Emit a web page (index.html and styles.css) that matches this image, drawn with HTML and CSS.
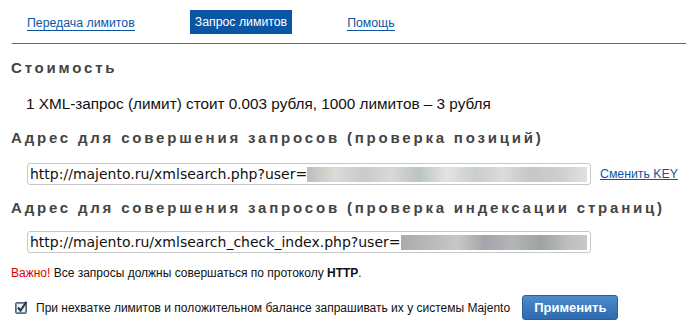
FILE: index.html
```html
<!DOCTYPE html>
<html lang="ru">
<head>
    <meta charset="UTF-8">
    <title>XML лимиты</title>
    <link rel="stylesheet" href="styles.css">
</head>
<body>

    <div class="tabs">
        <a class="tab" href="#">Передача лимитов</a>
        <a class="tab active" href="#">Запрос лимитов</a>
        <a class="tab" href="#">Помощь</a>
    </div>

    <div class="content">
        <h2>Стоимость</h2>
        <p class="price">1 XML-запрос (лимит) стоит 0.003 рубля, 1000 лимитов – 3 рубля</p>

        <h2>Адрес для совершения запросов (проверка позиций)</h2>
        <div class="url-row url-row-first">
            <div class="url-box">
                <span>http://majento.ru/xmlsearch.php?user=</span>
                <span class="blur blur-long"></span>
            </div>
            <a class="change-key" href="#">Сменить KEY</a>
        </div>

        <h2>Адрес для совершения запросов (проверка индексации страниц)</h2>
        <div class="url-row">
            <div class="url-box">
                <span>http://majento.ru/xmlsearch_check_index.php?user=</span>
                <span class="blur blur-short"></span>
            </div>
        </div>

        <p class="notice"><span class="important">Важно!</span> Все запросы должны совершаться по протоколу <b>HTTP</b>.</p>

        <div class="auto-row">
            <span class="checkbox">
                <svg width="13" height="13" viewBox="0 0 13 13">
                    <rect x="0.5" y="1.5" width="11" height="11" rx="1.5" fill="#7f93a8" stroke="#56677a"/>
                    <rect x="2" y="3" width="8" height="8" fill="#e9eef3"/>
                    <path d="M3 6.5 L5.5 9.5 L11.5 0.8" fill="none" stroke="#1f3550" stroke-width="2"/>
                </svg>
            </span>
            <span class="auto-text">При нехватке лимитов и положительном балансе запрашивать их у системы Majento</span>
            <button class="apply">Применить</button>
        </div>
    </div>

</body>
</html>
```

FILE: styles.css
```css
body {
    margin: 0;
    font-family: "Liberation Sans", Arial, sans-serif;
    color: #111;
    background: #fff;
    width: 686px;
    height: 330px;
    overflow: hidden;
}
.tabs {
    display: flex;
    align-items: flex-start;
    margin-left: 12px;
    padding-top: 10px;
    height: 33px;
    border-bottom: 1px solid #666;
}
.tabs .tab {
    font-size: 12.3px;
    color: #0b56a4;
    text-decoration: none;
    border-bottom: 1px solid #0b56a4;
    line-height: 14px;
    margin-top: 6px;
}
.tabs .tab:nth-child(1) {
    margin-left: 15px;
}
.tabs .tab.active {
    background: #0b56a4;
    color: #fff;
    border: none;
    padding: 5px 5px 5px 5px;
    margin: 0 0 0 55px;
}
.tabs .tab:nth-child(3) {
    margin-left: 55px;
}
.content {
    padding-left: 11px;
}
h2 {
    font-size: 15px;
    font-weight: bold;
    color: #444;
    letter-spacing: 2.8px;
    margin: 0;
    line-height: 18px;
}
h2:first-child {
    margin-top: 15px;
}
.price {
    font-size: 15.3px;
    margin: 18px 0 16px 15px;
    line-height: 18px;
}
.url-row {
    display: flex;
    align-items: center;
    margin: 14px 0 18px 16px;
}
.url-row-first {
    margin: 16px 0 14px 16px;
}
.url-box {
    width: 560px;
    height: 20px;
    border: 1px solid #c8c8c8;
    border-radius: 3px;
    display: flex;
    align-items: center;
    padding-left: 2px;
    font-family: "DejaVu Sans", Verdana, sans-serif;
    font-size: 14px;
    color: #111;
    overflow: hidden;
    white-space: nowrap;
}
.blur {
    display: inline-block;
    flex: 1;
    margin-right: 3px;
    height: 15px;
}
.blur-long {
    background: linear-gradient(90deg, #b9bfbb, #dcdbd6 10%, #c7cbcc 20%, #d9d7da 30%, #bcc4c4 40%, #e3e4e2 50%, #c9cfca 60%, #dadbdc 70%, #c5c8c4 80%, #d1cdcc 90%, #dce2e1);
}
.blur-short {
    background: linear-gradient(90deg, #a9ada7, #bab6ba 15%, #c6c9c8 30%, #a6a4ab 45%, #b3b6b7 60%, #9fa3a0 75%, #bcbfbd 90%, #c8c8c8);
}
.change-key {
    margin-left: 9px;
    font-size: 12.3px;
    color: #0b56a4;
}
.notice {
    font-size: 12px;
    margin: -5px 0 0 0;
    color: #111;
}
.important {
    color: #e00000;
}
.auto-row {
    display: flex;
    align-items: center;
    margin-top: 15px;
    padding-left: 4px;
}
.checkbox {
    display: flex;
    margin-right: 8px;
}
.auto-text {
    font-size: 12px;
}
.apply {
    margin-left: 12px;
    height: 25px;
    padding: 0 11px;
    border: 1px solid #2a5f9a;
    border-radius: 3px;
    background: linear-gradient(#4c8bcc, #2e6aad);
    color: #fff;
    font-family: "Liberation Sans", Arial, sans-serif;
    font-weight: bold;
    font-size: 13px;
}
```
